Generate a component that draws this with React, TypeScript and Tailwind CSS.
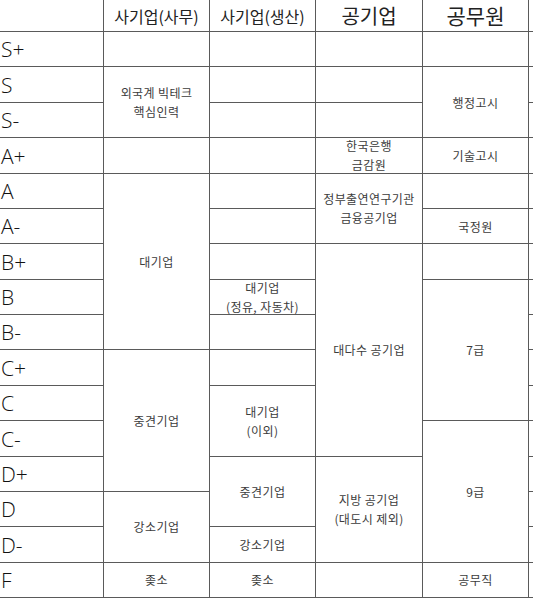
import React from "react";

type CellProps = {
  pos: string;
  children?: React.ReactNode;
};

// one box of the chart, placed on the grid by its pos classes
function Cell({ pos, children }: CellProps) {
  return (
    <div
      className={`${pos} flex flex-col items-center justify-center border-r border-b border-[#5a5a5a] text-center text-[12px] leading-[19px] tracking-[0.4px] text-[#3c3c3c]`}
    >
      {children}
    </div>
  );
}

const grades = [
  { label: "S+", pos: "row-start-2" },
  { label: "S", pos: "row-start-3" },
  { label: "S-", pos: "row-start-4" },
  { label: "A+", pos: "row-start-5" },
  { label: "A", pos: "row-start-6" },
  { label: "A-", pos: "row-start-7" },
  { label: "B+", pos: "row-start-8" },
  { label: "B", pos: "row-start-9" },
  { label: "B-", pos: "row-start-10" },
  { label: "C+", pos: "row-start-11" },
  { label: "C", pos: "row-start-12" },
  { label: "C-", pos: "row-start-13" },
  { label: "D+", pos: "row-start-14" },
  { label: "D", pos: "row-start-15" },
  { label: "D-", pos: "row-start-16" },
  { label: "F", pos: "row-start-17" },
];

// the cut-off column on the right edge
const edgeRows = [
  "row-start-1",
  "row-start-2",
  "row-start-3",
  "row-start-4",
  "row-start-5",
  "row-start-6",
  "row-start-7",
  "row-start-8",
  "row-start-9",
  "row-start-10",
  "row-start-11",
  "row-start-12",
  "row-start-13",
  "row-start-14",
  "row-start-15",
  "row-start-16",
  "row-start-17",
];

export default function App() {
  return (
    <div className="h-[598px] w-[533px] overflow-hidden bg-white font-['Noto_Sans_CJK_KR',sans-serif]">
      <div className="grid grid-cols-[104px_106px_106px_107px_106px_4px] grid-rows-[32px_repeat(16,35.375px)]">
        {/* header */}
        <div className="col-start-1 row-start-1 border-r border-b border-[#5a5a5a]" />
        <div className="col-start-2 row-start-1 flex items-center justify-center border-r border-b border-[#5a5a5a] text-[16px] text-[#222]">
          사기업(사무)
        </div>
        <div className="col-start-3 row-start-1 flex items-center justify-center border-r border-b border-[#5a5a5a] text-[16px] text-[#222]">
          사기업(생산)
        </div>
        <div className="col-start-4 row-start-1 flex items-center justify-center border-r border-b border-[#5a5a5a] text-[20px] text-[#222]">
          공기업
        </div>
        <div className="col-start-5 row-start-1 flex items-center justify-center border-r border-b border-[#5a5a5a] text-[21px] text-[#222]">
          공무원
        </div>

        {/* grade labels */}
        {grades.map((g) => (
          <div
            key={g.label}
            className={`${g.pos} col-start-1 flex items-center border-r border-b border-[#5a5a5a] pt-[2px] pl-[1px] font-['Open_Sans',sans-serif] text-[21px] font-light text-[#111]`}
          >
            {g.label}
          </div>
        ))}

        {/* 사기업(사무) */}
        <Cell pos="col-start-2 row-start-2" />
        <Cell pos="col-start-2 row-start-3 row-span-2">
          <span>외국계 빅테크</span>
          <span>핵심인력</span>
        </Cell>
        <Cell pos="col-start-2 row-start-5" />
        <Cell pos="col-start-2 row-start-6 row-span-5">대기업</Cell>
        <Cell pos="col-start-2 row-start-11 row-span-4">중견기업</Cell>
        <Cell pos="col-start-2 row-start-15 row-span-2">강소기업</Cell>
        <Cell pos="col-start-2 row-start-17">좆소</Cell>

        {/* 사기업(생산) */}
        <Cell pos="col-start-3 row-start-2" />
        <Cell pos="col-start-3 row-start-3" />
        <Cell pos="col-start-3 row-start-4" />
        <Cell pos="col-start-3 row-start-5" />
        <Cell pos="col-start-3 row-start-6" />
        <Cell pos="col-start-3 row-start-7" />
        <Cell pos="col-start-3 row-start-8" />
        <Cell pos="col-start-3 row-start-9">
          <span>대기업</span>
          <span>(정유, 자동차)</span>
        </Cell>
        <Cell pos="col-start-3 row-start-10" />
        <Cell pos="col-start-3 row-start-11" />
        <Cell pos="col-start-3 row-start-12 row-span-2">
          <span>대기업</span>
          <span>(이외)</span>
        </Cell>
        <Cell pos="col-start-3 row-start-14 row-span-2">중견기업</Cell>
        <Cell pos="col-start-3 row-start-16">강소기업</Cell>
        <Cell pos="col-start-3 row-start-17">좆소</Cell>

        {/* 공기업 */}
        <Cell pos="col-start-4 row-start-2" />
        <Cell pos="col-start-4 row-start-3" />
        <Cell pos="col-start-4 row-start-4" />
        <Cell pos="col-start-4 row-start-5">
          <span>한국은행</span>
          <span>금감원</span>
        </Cell>
        <Cell pos="col-start-4 row-start-6 row-span-2">
          <span>정부출연연구기관</span>
          <span>금융공기업</span>
        </Cell>
        <Cell pos="col-start-4 row-start-8 row-span-6">대다수 공기업</Cell>
        <Cell pos="col-start-4 row-start-14 row-span-3">
          <span>지방 공기업</span>
          <span>(대도시 제외)</span>
        </Cell>
        <Cell pos="col-start-4 row-start-17" />

        {/* 공무원 */}
        <Cell pos="col-start-5 row-start-2" />
        <Cell pos="col-start-5 row-start-3 row-span-2">행정고시</Cell>
        <Cell pos="col-start-5 row-start-5">기술고시</Cell>
        <Cell pos="col-start-5 row-start-6" />
        <Cell pos="col-start-5 row-start-7">국정원</Cell>
        <Cell pos="col-start-5 row-start-8" />
        <Cell pos="col-start-5 row-start-9 row-span-4">7급</Cell>
        <Cell pos="col-start-5 row-start-13 row-span-4">9급</Cell>
        <Cell pos="col-start-5 row-start-17">공무직</Cell>

        {/* edge of the next column */}
        {edgeRows.map((r) => (
          <div key={r} className={`${r} col-start-6 border-b border-[#5a5a5a]`} />
        ))}
      </div>
    </div>
  );
}
